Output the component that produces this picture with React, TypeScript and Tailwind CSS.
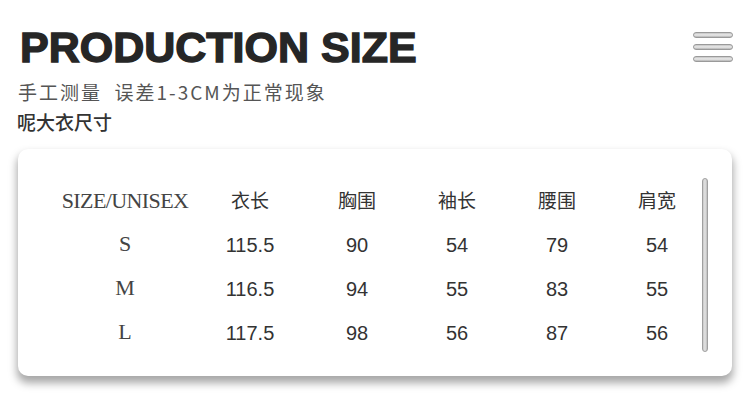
import React from 'react';

const headers = ['衣长', '胸围', '袖长', '腰围', '肩宽'];

const rows = [
  { size: 'S', values: ['115.5', '90', '54', '79', '54'] },
  { size: 'M', values: ['116.5', '94', '55', '83', '55'] },
  { size: 'L', values: ['117.5', '98', '56', '87', '56'] },
];

const gridCols = 'grid grid-cols-[150px_107px_100px_100px_100px_95px] h-[44px] items-center';

// padding that nudges a cell's centre so the columns line up with the print
const cellPad = ['pr-[7px]', '', '', '', 'pl-[5px]'];

function MenuBars() {
  return (
    <div className="mt-[6px] flex w-[40px] flex-col gap-[6px]">
      {[0, 1, 2].map((i) => (
        <div
          key={i}
          className="h-[6px] w-full rounded-[3px] border border-[#9a9a9a] bg-gradient-to-b from-[#c4c4c4] via-[#ececec] to-[#b4b4b4]"
        />
      ))}
    </div>
  );
}

export default function App() {
  return (
    <div className="h-[409px] w-[750px] overflow-hidden bg-white font-['Noto_Sans_CJK_SC',sans-serif]">
      {/* Title */}
      <div className="flex items-start justify-between pl-[20px] pr-[17px] pt-[26px]">
        <h1 className="font-['Liberation_Sans',Arial,sans-serif] text-[43px] font-bold leading-none text-[#262626] [-webkit-text-stroke:1.4px_#262626]">
          PRODUCTION SIZE
        </h1>
        <MenuBars />
      </div>

      <p className="mt-[11px] pl-[18px] text-[19px] leading-[24px] tracking-[2px] text-[#555]">
        手工测量&nbsp;&nbsp;误差1-3CM为正常现象
      </p>
      <p className="mt-[6px] pl-[17px] text-[19px] font-medium leading-[24px] text-[#333]">呢大衣尺寸</p>

      {/* Size table */}
      <div className="mx-[18px] mt-[15px] flex h-[227px] rounded-[10px] bg-white pl-[32px] pt-[29px] shadow-[0_6px_9px_1px_rgba(0,0,0,0.35)]">
        <div className="flex flex-col">
          <div className={gridCols}>
            <div className="text-center font-['Liberation_Serif',serif] text-[22px] tracking-[-0.6px] text-[#444]">
              SIZE/UNISEX
            </div>
            {headers.map((h, i) => (
              <div key={h} className={`text-center text-[19px] text-[#333] ${cellPad[i]}`}>
                {h}
              </div>
            ))}
          </div>
          {rows.map((row) => (
            <div key={row.size} className={gridCols}>
              <div className="-mt-[2px] text-center font-['Liberation_Serif',serif] text-[22px] text-[#444]">{row.size}</div>
              {row.values.map((v, i) => (
                <div
                  key={i}
                  className={`mt-[2px] text-center font-['Liberation_Sans',Arial,sans-serif] text-[20px] text-[#333] ${cellPad[i]}`}
                >
                  {v}
                </div>
              ))}
            </div>
          ))}
        </div>
        <div className="h-[174px] w-[6px] rounded-[3px] border border-[#a0a0a0] bg-gradient-to-r from-[#c8c8c8] via-[#e4e4e4] to-[#bdbdbd]" />
      </div>
    </div>
  );
}
